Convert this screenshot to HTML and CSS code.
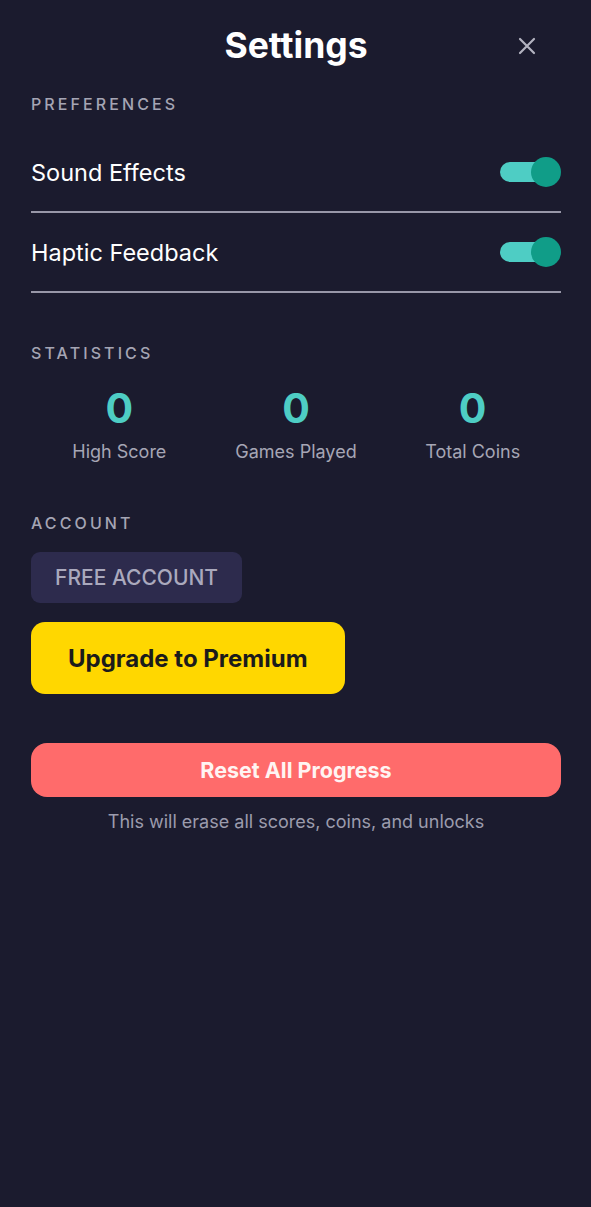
FILE: index.html
```html
<!DOCTYPE html>
<html lang="en">
<head>
    <meta charset="UTF-8">
    <meta name="viewport" content="width=device-width, initial-scale=1.0">
    <title>Settings</title>
    <link rel="stylesheet" href="styles.css">
</head>
<body>

    <div class="screen">
        <!-- Header -->
        <div class="header">
            <h1>Settings</h1>
            <button class="close-btn" aria-label="Close">
                <svg width="18" height="18" viewBox="0 0 18 18">
                    <path d="M2 2 L16 16 M16 2 L2 16" stroke="#b3b3c0" stroke-width="2.2" stroke-linecap="round"/>
                </svg>
            </button>
        </div>

        <!-- Preferences -->
        <div class="section-label first">PREFERENCES</div>
        <div class="row">
            <span>Sound Effects</span>
            <div class="toggle on"><div class="knob"></div></div>
        </div>
        <div class="row">
            <span>Haptic Feedback</span>
            <div class="toggle on"><div class="knob"></div></div>
        </div>

        <!-- Statistics -->
        <div class="section-label">STATISTICS</div>
        <div class="stats">
            <div class="stat">
                <div class="stat-num">0</div>
                <div class="stat-name">High Score</div>
            </div>
            <div class="stat">
                <div class="stat-num">0</div>
                <div class="stat-name">Games Played</div>
            </div>
            <div class="stat">
                <div class="stat-num">0</div>
                <div class="stat-name">Total Coins</div>
            </div>
        </div>

        <!-- Account -->
        <div class="section-label">ACCOUNT</div>
        <div class="account">
            <div class="badge">FREE ACCOUNT</div>
            <button class="upgrade-btn">Upgrade to Premium</button>
        </div>

        <button class="reset-btn">Reset All Progress</button>
        <p class="note">This will erase all scores, coins, and unlocks</p>
    </div>

</body>
</html>
```

FILE: styles.css
```css
/* General Reset */
body, h1, p, button {
    margin: 0;
    padding: 0;
}
body {
    background-color: #1b1b2e;
    font-family: Inter, "Noto Sans", sans-serif;
    color: #ffffff;
}
.screen {
    padding: 1px 30px 0 31px;
}
.header {
    position: relative;
    padding-top: 25px;
    height: 68px;
    text-align: center;
}
.header h1 {
    font-size: 35.5px;
    line-height: 40px;
    font-weight: 700;
}
.close-btn {
    position: absolute;
    right: 25px;
    top: 36px;
    background: none;
    border: none;
    cursor: pointer;
    line-height: 0;
}
.section-label {
    font-size: 16px;
    line-height: 20px;
    font-weight: 500;
    letter-spacing: 3.1px;
    color: #a5a5b4;
    margin-top: 50px;
}
.section-label.first {
    margin-top: 0;
    margin-bottom: 19px;
}
.row {
    display: flex;
    justify-content: space-between;
    align-items: center;
    height: 78px;
    border-bottom: 2px solid #9897a8;
    font-size: 23.5px;
    font-weight: 400;
}
.toggle {
    position: relative;
    width: 46px;
    height: 20px;
    border-radius: 10px;
    background-color: #4ecdc4;
    margin-right: 15px;
}
.toggle .knob {
    position: absolute;
    top: -5px;
    right: -15px;
    width: 30px;
    height: 30px;
    border-radius: 50%;
    background-color: #109d88;
}
.stats {
    display: grid;
    grid-template-columns: 1fr 1fr 1fr;
    margin-top: 21px;
    text-align: center;
}
.stat-num {
    font-size: 41px;
    line-height: 48px;
    font-weight: 700;
    color: #4ecdc4;
}
.stat-name {
    margin-top: 9px;
    font-size: 18px;
    line-height: 22px;
    color: #a6a6b5;
}
.account {
    display: flex;
    flex-direction: column;
    align-items: flex-start;
    margin-top: 19px;
}
.badge {
    height: 51px;
    line-height: 51px;
    padding: 0 24px;
    border-radius: 9px;
    background-color: #2d2b4d;
    color: #aaa9bd;
    font-size: 21px;
    font-weight: 500;
}
.upgrade-btn {
    margin-top: 19px;
    height: 72px;
    padding: 0 37px;
    border: none;
    border-radius: 14px;
    background-color: #ffd700;
    color: #1b1b1b;
    font-family: inherit;
    font-size: 24px;
    font-weight: 700;
    cursor: pointer;
}
.reset-btn {
    display: block;
    width: 100%;
    margin-top: 49px;
    height: 54px;
    border: none;
    border-radius: 16px;
    background-color: #ff6b6b;
    color: #fff4f2;
    font-family: inherit;
    font-size: 21.5px;
    font-weight: 700;
    cursor: pointer;
}
.note {
    margin-top: 14px;
    text-align: center;
    font-size: 18px;
    line-height: 22px;
    color: #9c9cad;
}
```
